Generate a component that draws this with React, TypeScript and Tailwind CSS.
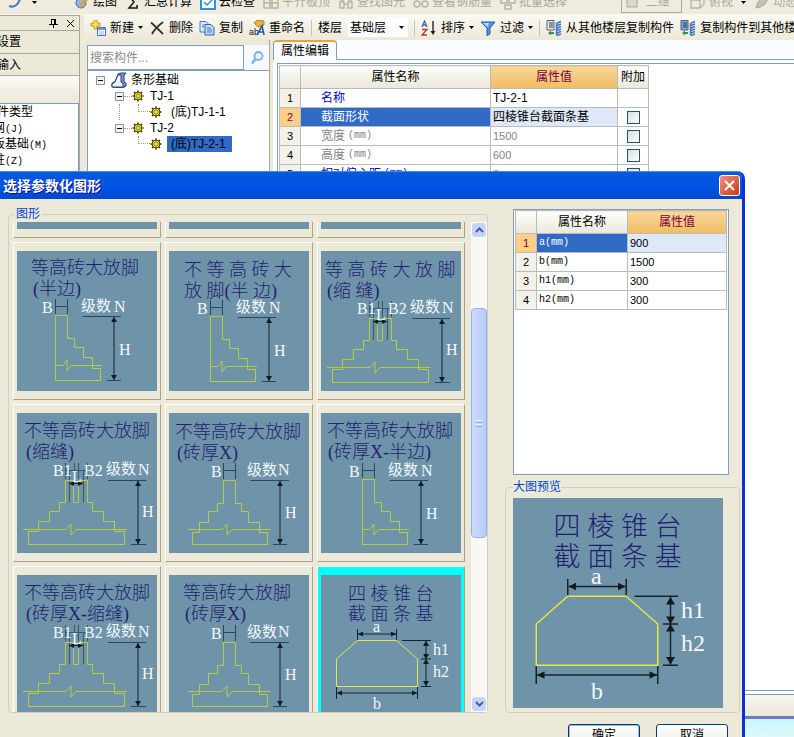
import { ReactNode, useLayoutEffect, useRef, useState } from 'react';

type Kind = 'half' | 'full' | 'seam' | 'trapezoid' | 'blank';

interface Shape {
  id: number;
  kind: Kind;
  title: string[];
  at: number[][];
  dx?: number;
  dy?: number;
}

const SHAPES: Shape[] = [
  { id: 1, kind: 'blank', title: [], at: [] },
  { id: 2, kind: 'blank', title: [], at: [] },
  { id: 3, kind: 'blank', title: [], at: [] },
  { id: 4, kind: 'half', title: ['等高砖大放脚', '(半边)'], at: [[14, 23], [16, 44]] },
  { id: 5, kind: 'half', title: ['不 等 高 砖 大', '放 脚(半 边)'], at: [[15, 25], [15, 46]], dx: 3, dy: 1 },
  { id: 6, kind: 'seam', title: ['等 高 砖 大 放 脚', '(缩 缝)'], at: [[4, 25], [6, 46]] },
  { id: 7, kind: 'seam', title: ['不等高砖大放脚', '(缩缝)'], at: [[7, 24], [9, 45]] },
  { id: 8, kind: 'full', title: ['不等高砖大放脚', '(砖厚X)'], at: [[6, 25], [8, 46]] },
  { id: 9, kind: 'half', title: ['不等高砖大放脚', '(砖厚X-半边)'], at: [[6, 24], [7, 45]], dx: 3, dy: 2 },
  { id: 10, kind: 'seam', title: ['不等高砖大放脚', '(砖厚X-缩缝)'], at: [[7, 24], [9, 45]] },
  { id: 11, kind: 'full', title: ['等高砖大放脚', '(砖厚X)'], at: [[14, 24], [16, 45]] },
  { id: 12, kind: 'trapezoid', title: ['四 棱 锥 台', '截 面 条 基'], at: [[27, 25], [27, 45]] },
];

const EDITOR_ROWS = [
  { name: '名称', unit: '', value: 'TJ-2-1', tone: 'text-[#0000d0]', check: false },
  { name: '截面形状', unit: '', value: '四棱锥台截面条基', tone: 'text-white', check: true },
  { name: '宽度', unit: '(mm)', value: '1500', tone: 'text-[#848484]', check: true },
  { name: '高度', unit: '(mm)', value: '600', tone: 'text-[#848484]', check: true },
  { name: '相对偏心距', unit: '(mm)', value: '0', tone: 'text-[#0000d0]', check: true },
];

const PARAM_ROWS = [
  ['a(mm)', '900'],
  ['b(mm)', '1500'],
  ['h1(mm)', '300'],
  ['h2(mm)', '300'],
];

/* ---------- section drawings ---------- */

function VDim({ x, y1, y2 }: { x: number; y1: number; y2: number }) {
  return (
    <g>
      <path d={`M${x} ${y1}V${y2}`} stroke="#14242c" />
      <path d={`M${x} ${y1}l-3 5h6zM${x} ${y2}l-3 -5h6z`} fill="#101a20" />
    </g>
  );
}

function HDim({ y, x1, x2 }: { y: number; x1: number; x2: number }) {
  return (
    <g>
      <path d={`M${x1} ${y}H${x2}`} stroke="#14242c" />
      <path d={`M${x1} ${y}l5 -2.5v5zM${x2} ${y}l-5 -2.5v5z`} fill="#101a20" />
    </g>
  );
}

function HalfWall() {
  return (
    <g fill="none">
      <path d="M38.5 48V63M50.5 48V63M38.5 55.5H50.5" stroke="#2c4858" />
      <path d="M66 65.5H104M90 129.5H104" stroke="#2c4858" />
      <VDim x={97} y1={66} y2={129} />
      <path d="M38.5 64.5H50.5V87.5H57.5V96.5H66.5V106.5H75.5V117.5H83.5V129.5H38.5Z" stroke="#b4cf3e" />
      <path d="M38 114.5H46L50 109V120L54 114.5H85" stroke="#b4cf3e" />
      <g fill="#f2f8fc" stroke="none" fontSize="16">
        <text x="25" y="62">B</text>
        <text x="64" y="60" fontSize="15">级数</text>
        <text x="97" y="61">N</text>
        <text x="102" y="104">H</text>
      </g>
    </g>
  );
}

function FullWall() {
  return (
    <g fill="none">
      <path d="M54.5 50V66M66.5 50V66M54.5 57.5H66.5" stroke="#2c4858" />
      <path d="M81 67.5H120M104 131.5H118" stroke="#2c4858" />
      <VDim x={111} y1={68} y2={131} />
      <path d="M54.5 67.5H66.5V90.5H72.5V98.5H79.5V109.5H90.5V119.5H98.5V131.5H23.5V119.5H30.5V109.5H39.5V98.5H48.5V90.5H54.5Z" stroke="#b4cf3e" />
      <path d="M19 116.5H53L58 111V122L63 116.5H101" stroke="#b4cf3e" />
      <g fill="#f2f8fc" stroke="none" fontSize="16">
        <text x="42" y="64">B</text>
        <text x="78" y="62" fontSize="15">级数</text>
        <text x="109" y="62">N</text>
        <text x="116" y="105">H</text>
      </g>
    </g>
  );
}

function SeamWall() {
  return (
    <g fill="none">
      <path d="M48.5 50V66M52.5 57V89M57.5 50V66M61.5 50V66M66.5 57V89M70.5 50V66M48 57.5H71" stroke="#3c5868" />
      <path d="M91 67.5H129M114 131.5H129" stroke="#2c4858" />
      <VDim x={121} y1={68} y2={131} />
      <path d="M48.5 67.5H56.5V89.5H61.5V67.5H70.5V89.5H75.5V98.5H86.5V108.5H97.5V118.5H107.5V131.5H11.5V118.5H21.5V108.5H32.5V98.5H42.5V89.5H48.5Z" stroke="#b4cf3e" />
      <path d="M6 116.5H49L54 111V122L59 116.5H110" stroke="#b4cf3e" />
      <HDim y={70.5} x1={52} x2={66} />
      <g fill="#f2f8fc" stroke="none" fontSize="16">
        <text x="36" y="63">B1</text>
        <text x="67" y="63">B2</text>
        <text x="55" y="69">L</text>
        <text x="89" y="61" fontSize="15">级数</text>
        <text x="121" y="62">N</text>
        <text x="125" y="104">H</text>
      </g>
    </g>
  );
}

function Trapezoid() {
  return (
    <g fill="none">
      <path d="M36.5 54V65M75.5 54V65M81 65.5H110M100 84H110M100 111.5H110M15.5 112V124M96.5 112V124" stroke="#14242c" />
      <HDim y={59} x1={37} x2={75} />
      <HDim y={118} x1={16} x2={96} />
      <VDim x={105} y1={66} y2={84} />
      <VDim x={105} y1={84} y2={111} />
      <path d="M36.5 65.5H75.5L96.5 84V111.5H15.5V84Z" stroke="#e6e83c" />
      <g fill="#f2f8fc" stroke="none" fontSize="16">
        <text x="52" y="57">a</text>
        <text x="112" y="80">h1</text>
        <text x="112" y="102">h2</text>
        <text x="52" y="134">b</text>
      </g>
    </g>
  );
}

function Drawing({ shape, className }: { shape: Shape; className: string }) {
  return (
    <svg viewBox="0 0 140 140" className={`block bg-[#6f93a9] font-['Liberation_Serif','Noto_Sans_CJK_SC',serif] ${className}`}>
      <g fill="#211f70" fontSize="18" fontWeight="300">
        {shape.title.map((line, i) => (
          <text key={line} x={shape.at[i][0]} y={shape.at[i][1]}>{line}</text>
        ))}
      </g>
      <g transform={`translate(${shape.dx ?? 0} ${shape.dy ?? 0})`}>
        {shape.kind === 'half' && <HalfWall />}
        {shape.kind === 'full' && <FullWall />}
        {shape.kind === 'seam' && <SeamWall />}
        {shape.kind === 'trapezoid' && <Trapezoid />}
      </g>
    </svg>
  );
}

/* ---------- small icons ---------- */

function Icon({ children }: { children: ReactNode }) {
  return <svg viewBox="0 0 16 16" className="w-4 h-4 shrink-0" fill="none">{children}</svg>;
}

function Caret() {
  return <svg viewBox="0 0 5 3" className="w-[5px] h-[3px] shrink-0"><path d="M0 0h5L2.5 3z" fill="#000" /></svg>;
}

const NewIcon = () => (
  <Icon>
    <path d="M4 0h3v3h3v3H7v3H4V6H1V3h3z" fill="#ffe14a" stroke="#b58a10" strokeWidth=".8" />
    <path d="M7.500 7.500h8v8h-8z" fill="#f4f8ff" stroke="#4a70b8" />
    <path d="M8 8h7v2H8z" fill="#6f9ae0" />
    <path d="M9 12h5M9 14h5" stroke="#9ab4dc" />
  </Icon>
);

const DeleteIcon = () => (
  <Icon><path d="M2 2.500C6 6 10 10 14 14M14 2C9 6 5 10 3 14" stroke="#333" strokeWidth="1.800" /></Icon>
);

const CopyIcon = () => (
  <Icon>
    <path d="M1 1.500h6l2 2V12H1z" fill="#dceafe" stroke="#4c78c0" />
    <path d="M6 4.500h6l3 3V15H6z" fill="#c4dafa" stroke="#2f62b4" />
    <path d="M8 8h4M8 10h5M8 12h5M3 5h2M3 7h2" stroke="#4c78c0" />
  </Icon>
);

const RenameIcon = () => (
  <Icon>
    <path d="M5 3l3-3 7 1v4L9 7z" fill="#e8b640" stroke="#8a6414" strokeWidth=".7" />
    <text x="0" y="15" fontSize="9" fill="#222" fontFamily="Liberation Sans">ab</text>
    <path d="M8 15L13 6l2 9M10 12h5" stroke="#2f56a8" strokeWidth="1.600" />
  </Icon>
);

const SortIcon = () => (
  <Icon>
    <path d="M1 7L3.500 1 6 7M2 5h3" stroke="#3a62b0" strokeWidth="1.300" />
    <path d="M1 9.500h5L1 15h5" stroke="#b03a3a" strokeWidth="1.300" />
    <path d="M12 1v12" stroke="#222" strokeWidth="1.400" />
    <path d="M9.500 11h5L12 15z" fill="#222" />
  </Icon>
);

const FilterIcon = () => (
  <Icon><path d="M1 2h14l-5 6v6l-3 1.500V8z" fill="#5a94e8" stroke="#2458b0" /><path d="M3 3h6L7.500 7z" fill="#bcd8fc" /></Icon>
);

const FloorIcon = ({ tone }: { tone: string }) => (
  <Icon>
    <path d="M1 .5h7V10H1z" fill={tone} stroke="#55606c" />
    <path d="M3 3h4M3 5h4M3 7h4" stroke="#333c48" />
    <path d="M11 3l4-1.500M11 5.500L15 4M11 8l4-1.500M11 10.500L15 9M11 13l4-1.500M11 15.500l4-1.500M10.500 3v12.500" stroke="#3f72c4" strokeWidth="1.400" />
    <path d="M2 13l3-2.500V12h3v2H5v1.500z" fill="#2c9a48" />
  </Icon>
);

const Gear = () => (
  <svg viewBox="0 0 12 12" className="w-3 h-3 shrink-0">
    <path d="M6 .5v11M.5 6h11M2 2l8 8M10 2l-8 8" stroke="#3c3600" strokeWidth="1.600" />
    <circle cx="6" cy="6" r="4" fill="#ece030" stroke="#4c4400" />
    <path d="M6 3v6M3 6h6M4 4l4 4M8 4l-4 4" stroke="#6c6000" strokeWidth=".7" />
    <circle cx="6" cy="6" r="1" fill="#fffbd0" />
  </svg>
);

const Minus = () => (
  <svg viewBox="0 0 9 9" className="w-[9px] h-[9px] shrink-0">
    <path d="M.5 .5h8v8h-8z" fill="#f4f2ea" stroke="#7f93ad" />
    <path d="M2 4.500h5" stroke="#000" />
  </svg>
);

/* ---------- main window ---------- */

function TopItem({ icon, label, off }: { icon: ReactNode; label: string; off?: boolean }) {
  return (
    <button className={`flex items-center gap-[3px] shrink-0 ${off ? 'text-[#aca899]' : 'text-black'}`}>
      <Icon>{icon}</Icon>{label}
    </button>
  );
}

function TopBar() {
  return (
    <header className="h-[15px] shrink-0 overflow-hidden flex items-end bg-[#efecdf] border-b border-[#f8f6ee]">
      <div className="flex items-center gap-2 h-6 pl-2 whitespace-nowrap">
        <button className="flex items-center gap-2 w-[58px]" aria-label="撤销">
          <Icon><path d="M1 12c5 2 9-1 11-7" stroke="#3f74cc" strokeWidth="2" /></Icon><Caret />
        </button>
        <TopItem label="绘图" icon={<><circle cx="7" cy="9" r="5" fill="#8fb6ea" stroke="#3c68b0" /><path d="M5 13L14 4" stroke="#e0a030" strokeWidth="3" /></>} />
        <TopItem label="汇总计算" icon={<path d="M12 5V2H4l5 6-5 6h8v-3" stroke="#111" strokeWidth="1.500" />} />
        <TopItem label="云检查" icon={<><path d="M1 1h14v14H1z" fill="#fff" stroke="#2a94d4" strokeWidth="2" /><path d="M4 8l3 3 5-5" stroke="#2a94d4" strokeWidth="1.500" /></>} />
        <TopItem off label="平齐板顶" icon={<path d="M1 5h6v9H1zM9 3h6v11H9zM1 9h14" stroke="#b8b4a6" strokeWidth="1.500" />} />
        <TopItem off label="查找图元" icon={<path d="M2 8h4v6H2zM10 8h4v6h-4zM6 10h4M3 8V3h2v5M11 8V3h2v5" stroke="#b8b4a6" strokeWidth="1.500" />} />
        <TopItem off label="查看钢筋量" icon={<><circle cx="4" cy="10" r="3" stroke="#b8b4a6" strokeWidth="1.500" /><circle cx="12" cy="10" r="3" stroke="#b8b4a6" strokeWidth="1.500" /></>} />
        <TopItem off label="批量选择" icon={<path d="M1 3h6v6H1zM9 3h6v6H9zM5 11h6v4H5z" stroke="#b8b4a6" strokeWidth="1.500" />} />
        <button className="flex items-center gap-2 h-[21px] w-[61px] ml-[46px] px-1 border border-[#aca899] text-[#aca899] shrink-0">
          <svg viewBox="0 0 12 12" className="w-3 h-3"><path d="M1 1h10v10H1z" fill="#dedacb" stroke="#aca899" /></svg>二维
        </button>
        <TopItem off label="俯视" icon={<path d="M1 6l4-4h9v8l-4 4H1zM1 6h9v8M10 6l4-4" stroke="#b8b4a6" strokeWidth="1.300" />} />
        <Caret />
        <TopItem off label="动态观察" icon={<path d="M2 14C4 5 9 3 14 2c0 6-4 11-12 12z" fill="#c4c0b2" stroke="#a8a496" />} />
      </div>
    </header>
  );
}

function Tool({ icon, label, menu }: { icon: ReactNode; label: string; menu?: boolean }) {
  return (
    <button className="flex items-center gap-1 shrink-0">
      {icon}{label}{menu && <Caret />}
    </button>
  );
}

const Sep = () => <span className="w-px h-4 bg-[#c8c4b2] shrink-0" />;

function ToolBar() {
  return (
    <div className="flex items-center gap-[6px] h-[25px] shrink-0 pl-[6px] whitespace-nowrap overflow-hidden bg-linear-to-b from-[#faf9f4] to-[#ece9d8]">
      <Tool icon={<NewIcon />} label="新建" menu />
      <Tool icon={<DeleteIcon />} label="删除" />
      <Tool icon={<CopyIcon />} label="复制" />
      <Tool icon={<RenameIcon />} label="重命名" />
      <Sep />
      <label htmlFor="floor">楼层</label>
      <div className="flex items-center h-[19px] w-[60px] pr-1 bg-white shrink-0">
        <select id="floor" className="appearance-none grow pl-[2px] outline-none bg-transparent">
          <option>基础层</option>
        </select>
        <Caret />
      </div>
      <Sep />
      <Tool icon={<SortIcon />} label="排序" menu />
      <Tool icon={<FilterIcon />} label="过滤" menu />
      <Sep />
      <Tool icon={<FloorIcon tone="#e4e8ec" />} label="从其他楼层复制构件" />
      <Tool icon={<FloorIcon tone="#7aa6e4" />} label="复制构件到其他楼层" />
    </div>
  );
}

function Dock() {
  return (
    <aside className="flex flex-col w-20 shrink-0 overflow-hidden border-r border-[#aca899] bg-[#ece9d8] whitespace-nowrap">
      <div className="flex items-center justify-end gap-2 h-4 shrink-0 pr-1 border-y border-[#aca899]">
        <button aria-label="固定"><svg viewBox="0 0 9 9" className="w-[9px] h-[9px]"><path d="M2.500 0v5M6.500 0v5M2 .5h5M0 5.500h9M4.500 6v3M5.500 0v5" stroke="#000" fill="none" /></svg></button>
        <button aria-label="关闭"><svg viewBox="0 0 9 9" className="w-[9px] h-[9px]"><path d="M1 1l7 7M8 1L1 8" stroke="#000" /></svg></button>
      </div>
      <button className="h-[23px] text-left border-b border-[#aca899]"><span className="-ml-[3px]">设置</span></button>
      <button className="h-[22px] text-left border-b border-[#aca899]"><span className="-ml-[3px]">输入</span></button>
      <div className="h-[27px] bg-linear-to-b from-[#fbfaf6] to-[#ece9d8]" />
      <ul className="grow bg-white border border-l-0 border-[#7f9db9]">
        <li className="h-4 -ml-[3px]">件类型</li>
        <li className="h-4 -ml-[7px]">网<span className="font-['Liberation_Mono'] text-[10px]">(J)</span></li>
        <li className="h-4 -ml-[7px]">板基础<span className="font-['Liberation_Mono'] text-[10px]">(M)</span></li>
        <li className="h-4 -ml-[7px]">柱<span className="font-['Liberation_Mono'] text-[10px]">(Z)</span></li>
      </ul>
    </aside>
  );
}

function Branch({ label, last }: { label: string; last?: boolean }) {
  return (
    <li className="flex items-center h-4 pl-[31px]">
      <span className={`w-[19px] h-full ${last ? '' : 'border-l border-dotted border-[#9a9a9a]'}`} />
      <span className="w-3 h-2 self-start border-l border-b border-dotted border-[#9a9a9a]" />
      <Gear />
      <span className={`ml-[5px] px-1 ${last ? 'bg-[#316ac5] text-black pr-[6px]' : ''}`}>{label}</span>
    </li>
  );
}

function Node({ label }: { label: string }) {
  return (
    <li className="flex items-center h-4 pl-[27px]">
      <Minus />
      <span className="w-2 border-t border-dotted border-[#9a9a9a]" />
      <Gear />
      <span className="ml-[6px]">{label}</span>
    </li>
  );
}

function ComponentPanel() {
  return (
    <section className="flex flex-col w-[186px] shrink-0 pl-[3px] pt-[5px] border-r border-[#aca899]">
      <div className="flex h-[25px] shrink-0">
        <input aria-label="搜索构件" placeholder="搜索构件..." className="w-[157px] min-w-0 px-[2px] bg-white border border-[#7f9db9] text-[12px] placeholder:text-[#8a8a8a] outline-none" />
        <button aria-label="搜索" className="grow flex items-center justify-center bg-[#f6faff]">
          <svg viewBox="0 0 16 16" className="w-4 h-4" fill="none"><circle cx="9.500" cy="6" r="4" fill="#e4f3fd" stroke="#7ab4e0" strokeWidth="1.800" /><path d="M6.500 9L3 13.500" stroke="#7ab4e0" strokeWidth="2.500" /></svg>
        </button>
      </div>
      <ul className="grow bg-white border-t border-l border-[#7f9db9] pt-px">
        <li className="flex items-center h-4 pl-2">
          <Minus />
          <svg viewBox="0 0 16 16" className="w-4 h-4 ml-[6px] mr-1" fill="none">
            <path d="M1 15v-4l3-1 3-8 3-1h5l-2 2v7l2 1v3l-3 2z" fill="#6d9ccc" stroke="#24426e" />
            <path d="M1 15v-3l3-2 3-7h3v7l2 2v3z" fill="#f2f7fd" stroke="#24426e" />
          </svg>
          条形基础
        </li>
        <Node label="TJ-1" />
        <Branch label="(底)TJ-1-1" />
        <Node label="TJ-2" />
        <Branch label="(底)TJ-2-1" last />
      </ul>
    </section>
  );
}

const HEAD = 'border border-[#b8bcc0] font-normal p-0 bg-linear-to-b from-[#fdfdfb] to-[#ebe8da]';
const HEAD_ACTIVE = 'border border-[#b8bcc0] font-normal p-0 bg-linear-to-b from-[#f8d79a] to-[#f0bc60] text-[#7a0040]';

function EditorPanel() {
  return (
    <section className="flex flex-col grow min-w-0 pl-[3px] bg-[#ece9d8]">
      <div className="flex h-5 shrink-0 bg-[#fafcff] border-b border-[#7f9db9]">
        <button className="w-16 h-5 shrink-0 border-x border-t-2 border-x-[#7f9db9] border-t-[#e8a33c] rounded-t-sm bg-[#fafcff]">属性编辑</button>
      </div>
      <div className="grow bg-[#fafcff] pl-1 pt-[3px]">
        <div className="h-full bg-white border-t border-l border-[#7f9db9] pt-px pl-px">
          <table className="table-fixed w-[369px] border-collapse">
            <colgroup><col className="w-[21px]" /><col className="w-[190px]" /><col className="w-[127px]" /><col className="w-[31px]" /></colgroup>
            <thead>
              <tr className="h-[23px]">
                <th className={HEAD} /><th className={HEAD}>属性名称</th><th className={HEAD_ACTIVE}>属性值</th><th className={HEAD}>附加</th>
              </tr>
            </thead>
            <tbody>
              {EDITOR_ROWS.map((r, i) => (
                <tr key={r.name} className="h-[19px]">
                  <td className={`border border-[#b8bcc0] p-0 text-center text-[11px] ${i === 1 ? 'bg-[#fbcf86] text-[#7a0040]' : 'bg-[#f3f1e8]'}`}>{i + 1}</td>
                  <td className={`border border-[#b8bcc0] p-0 pl-5 ${r.tone} ${i === 1 ? 'bg-[#316ac5]' : ''}`}>
                    <div className="flex items-center h-4">
                      {r.name}{r.unit && <span className="font-['Liberation_Mono'] text-[10px] pl-[3px]">{r.unit}</span>}
                    </div>
                  </td>
                  <td className={`border border-[#b8bcc0] p-0 pl-[2px] ${i === 1 ? 'bg-[#dfe8f6]' : ''} ${i > 1 ? 'text-[11px] text-[#848484]' : ''}`}>{r.value}</td>
                  <td className="border border-[#b8bcc0] p-0">
                    {r.check && <input type="checkbox" aria-label={`附加 ${r.name}`} className="block mx-auto appearance-none w-[13px] h-[13px] border border-[#1c5180] bg-linear-to-br from-[#dcdcd7] to-white" />}
                  </td>
                </tr>
              ))}
            </tbody>
          </table>
        </div>
      </div>
    </section>
  );
}

/* ---------- dialog ---------- */

function ScrollBar() {
  return (
    <div className="flex flex-col w-4 shrink-0 bg-[#f9f8f4]">
      <button aria-label="向上" className="flex items-center justify-center h-4 shrink-0 rounded-sm border border-white bg-[#c3d3fd]">
        <svg viewBox="0 0 9 6" className="w-[9px] h-[6px]"><path d="M1 5l3.500-3.500L8 5" stroke="#4d6185" strokeWidth="2" fill="none" /></svg>
      </button>
      <div className="grow pt-[70px]">
        <div className="flex flex-col items-center justify-center gap-px h-[230px] rounded-sm border border-[#98b0e8] bg-linear-to-r from-[#cbd9fe] to-[#b9cbfa]">
          <span className="w-[6px] h-px bg-[#eef4fe]" /><span className="w-[6px] h-px bg-[#8cb0f8]" />
          <span className="w-[6px] h-px bg-[#eef4fe]" /><span className="w-[6px] h-px bg-[#8cb0f8]" />
        </div>
      </div>
      <button aria-label="向下" className="flex items-center justify-center h-4 shrink-0 rounded-sm border border-white bg-[#c3d3fd]">
        <svg viewBox="0 0 9 6" className="w-[9px] h-[6px]"><path d="M1 1l3.500 3.500L8 1" stroke="#4d6185" strokeWidth="2" fill="none" /></svg>
      </button>
    </div>
  );
}

function Gallery({ selected, onSelect }: { selected: number; onSelect: (id: number) => void }) {
  const box = useRef<HTMLDivElement>(null);

  // open with the selected row in view
  useLayoutEffect(() => {
    if (box.current) box.current.scrollTop = 142;
  }, []);

  return (
    <fieldset className="grow min-w-0 border border-[#d0d0bf] rounded-sm pl-1">
      <legend className="h-4 ml-px px-[2px] text-[#0046d5]">图形</legend>
      <div className="flex h-[490px] justify-between">
        <div ref={box} className="h-full overflow-y-auto [scrollbar-width:none]">
          <div className="grid grid-cols-[148px_148px_148px] gap-1">
            {SHAPES.map(s => (
              <button
                key={s.id}
                onClick={() => onSelect(s.id)}
                aria-label={s.title.join('') || '图形'}
                className={`px-[3px] py-2 border border-t-white border-l-white border-r-[#aca08c] border-b-[#aca08c] ${s.id === selected ? 'bg-[#00ffff]' : 'bg-[#ece9d8]'}`}
              >
                <Drawing shape={s} className="w-[140px] h-[140px]" />
              </button>
            ))}
          </div>
        </div>
        <ScrollBar />
      </div>
    </fieldset>
  );
}

function ParamTable() {
  return (
    <div className="h-[266px] w-[216px] ml-2 pl-px bg-white border border-[#7f9db9]">
      <table className="table-fixed w-[211px] border-collapse">
        <colgroup><col className="w-[21px]" /><col className="w-[91px]" /><col className="w-[99px]" /></colgroup>
        <thead>
          <tr className="h-[23px]"><th className={HEAD} /><th className={HEAD}>属性名称</th><th className={HEAD_ACTIVE}>属性值</th></tr>
        </thead>
        <tbody>
          {PARAM_ROWS.map(([name, value], i) => (
            <tr key={name} className="h-[19px]">
              <td className={`border border-[#b8bcc0] p-0 text-center text-[11px] ${i === 0 ? 'bg-[#fbcf86] text-[#7a0040]' : 'bg-[#f3f1e8]'}`}>{i + 1}</td>
              <td className={`border border-[#b8bcc0] p-0 pl-[2px] font-['Liberation_Mono'] text-[10px] ${i === 0 ? 'bg-[#316ac5] text-white' : ''}`}>{name}</td>
              <td className={`border border-[#b8bcc0] p-0 pl-[2px] text-[11px] ${i === 0 ? 'bg-[#dfe8f6]' : ''}`}>{value}</td>
            </tr>
          ))}
        </tbody>
      </table>
    </div>
  );
}

function ShapeDialog() {
  const [selected, setSelected] = useState(12);
  const shape = SHAPES.find(s => s.id === selected) ?? SHAPES[11];

  return (
    <div role="dialog" aria-labelledby="dlg-title" className="absolute left-0 right-[49px] top-[171px] bottom-0 overflow-hidden flex flex-col rounded-tr-lg border-r-[3px] border-[#0831d9] bg-[#ece9d8]">
      <div className="flex items-center justify-between h-7 shrink-0 pl-[3px] pr-[2px] bg-linear-to-b from-[#0a58d8] via-[#0055e8] to-[#0048d0] border-t border-[#3a8cff]">
        <h2 id="dlg-title" className="text-[14px] font-bold text-white [text-shadow:1px_1px_#0f1089]">选择参数化图形</h2>
        <button aria-label="关闭" className="flex items-center justify-center w-[21px] h-[21px] rounded-[3px] border border-white bg-linear-to-br from-[#f09078] to-[#c83410]">
          <svg viewBox="0 0 11 11" className="w-[11px] h-[11px]"><path d="M1 1l9 9M10 1L1 10" stroke="#fff" strokeWidth="2" /></svg>
        </button>
      </div>
      <div className="flex items-start gap-[17px] pt-[7px] pl-2 pr-[2px]">
        <Gallery selected={selected} onSelect={setSelected} />
        <div className="w-[235px] shrink-0 pt-[3px]">
          <ParamTable />
          <fieldset className="mt-1 border border-[#d0d0bf] rounded-sm px-[7px] pt-[3px] pb-1">
            <legend className="h-4 text-[#0046d5]">大图预览</legend>
            <Drawing shape={shape} className="w-[210px] h-[210px]" />
          </fieldset>
          <div className="flex gap-4 justify-end pr-3 pt-[11px]">
            <button className="w-[72px] h-[22px] rounded-[3px] border border-[#003c74] bg-linear-to-b from-white to-[#ecebe5] ring-1 ring-inset ring-[#98b8ea]">确定</button>
            <button className="w-[72px] h-[22px] rounded-[3px] border border-[#003c74] bg-linear-to-b from-white to-[#ecebe5]">取消</button>
          </div>
        </div>
      </div>
    </div>
  );
}

export default function App() {
  return (
    <div className="relative flex flex-col h-screen overflow-hidden bg-[#ece9d8] text-black text-[12px] leading-4 font-['Liberation_Sans','Noto_Sans_CJK_SC',sans-serif]">
      <TopBar />
      <div className="flex grow min-h-0">
        <Dock />
        <div className="flex flex-col grow min-w-0 ml-1">
          <ToolBar />
          <div className="flex grow min-h-0">
            <ComponentPanel />
            <EditorPanel />
          </div>
        </div>
      </div>
      <footer className="shrink-0">
        <div className="h-[5px] border-t border-b border-[#7f9db9] bg-white" />
        <div className="h-[21px] bg-linear-to-b from-[#f7f5ee] to-[#ece9d8]" />
        <div className="h-[3px] bg-[#6f78c4]" />
        <div className="h-[18px] bg-linear-to-b from-[#c8f6fa] to-[#dcfafc]" />
      </footer>
      <ShapeDialog />
    </div>
  );
}
